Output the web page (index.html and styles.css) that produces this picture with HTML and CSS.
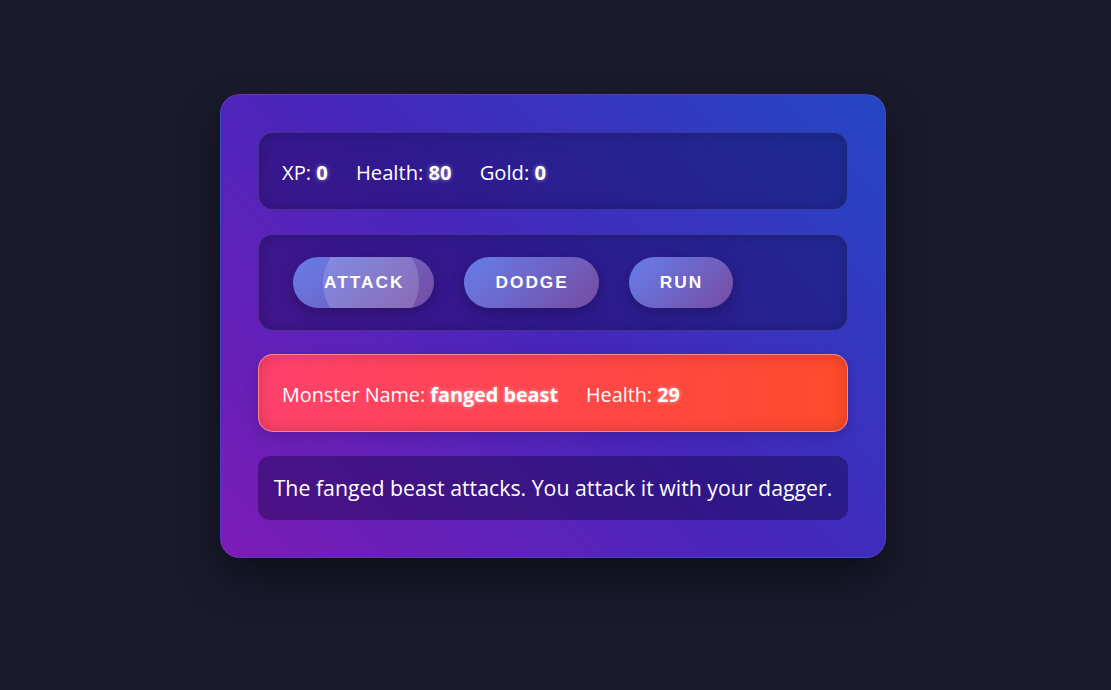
FILE: index.html
```html
<!DOCTYPE html>
<html lang="en">
<head>
<meta charset="utf-8">
<title>Dragon Game</title>
<link rel="stylesheet" href="styles.css">
</head>
<body>
<div class="game">
  <div class="panel stats">
    <span class="stat">XP: <strong>0</strong></span>
    <span class="stat">Health: <strong>80</strong></span>
    <span class="stat">Gold: <strong>0</strong></span>
  </div>
  <div class="panel controls">
    <button class="btn ripple">Attack</button>
    <button class="btn">Dodge</button>
    <button class="btn">Run</button>
  </div>
  <div class="panel monster">
    <span class="stat">Monster Name: <strong>fanged beast</strong></span>
    <span class="stat">Health: <strong>29</strong></span>
  </div>
  <div class="log">The fanged beast attacks. You attack it with your dagger.</div>
</div>
</body>
</html>
```

FILE: styles.css
```css
* { box-sizing: border-box; }
html, body { margin: 0; height: 100%; }
body {
  background: #1a1a2e;
  font-family: "Open Sans", "Noto Sans", sans-serif;
  color: #fff;
  display: flex;
  justify-content: center;
  align-items: flex-start;
  padding-top: 94px;
  padding-right: 5px;
}
.game {
  width: 666px;
  padding: 37px;
  border-radius: 20px;
  border: 1px solid rgba(255,255,255,0.08);
  background: linear-gradient(45deg, #7c1cb6 0%, #4626bb 50%, #2447c4 100%);
  box-shadow: 0 20px 40px rgba(0,0,0,0.45);
  display: flex;
  flex-direction: column;
  gap: 23.6px;
}
.panel {
  border-radius: 15px;
  border: 1px solid rgba(255,255,255,0.1);
  background: rgba(10,0,60,0.35);
  box-shadow: inset 0 0 15px rgba(0,0,0,0.2);
}
.stats, .monster {
  height: 78px;
  padding: 2px 23px 0;
  display: flex;
  align-items: center;
  font-size: 20.2px;
}
.stat { margin-right: 28px; }
strong {
  font-weight: 700;
  text-shadow: 0 0 4px rgba(255,255,255,0.5);
}
.controls {
  height: 97px;
  padding: 0 34px;
  display: flex;
  align-items: center;
  gap: 30px;
}
.btn {
  position: relative;
  overflow: hidden;
  height: 51px;
  padding: 0 30px 0 31px;
  border: none;
  border-radius: 26px;
  background: linear-gradient(135deg, #667eea 0%, #764ba2 100%);
  color: #fff;
  font-family: "Liberation Sans", Arial, sans-serif;
  font-weight: 700;
  font-size: 17.3px;
  letter-spacing: 2px;
  text-transform: uppercase;
  box-shadow: 0 4px 15px rgba(0,0,0,0.25);
}
.ripple::after {
  content: "";
  position: absolute;
  left: 30px;
  top: -22px;
  width: 96px;
  height: 96px;
  border-radius: 50%;
  background: rgba(255,255,255,0.16);
}
.monster {
  font-size: 19.8px;
  background: linear-gradient(90deg, #ff416c 0%, #ff4b2b 100%);
  border: 1px solid rgba(255,255,255,0.35);
  box-shadow: inset 0 0 15px rgba(0,0,0,0.18), 0 4px 15px rgba(0,0,0,0.15);
}
.log {
  height: 64px;
  border-radius: 12px;
  background: rgba(10,0,50,0.38);
  display: flex;
  align-items: center;
  justify-content: center;
  font-size: 21.3px;
}
```
